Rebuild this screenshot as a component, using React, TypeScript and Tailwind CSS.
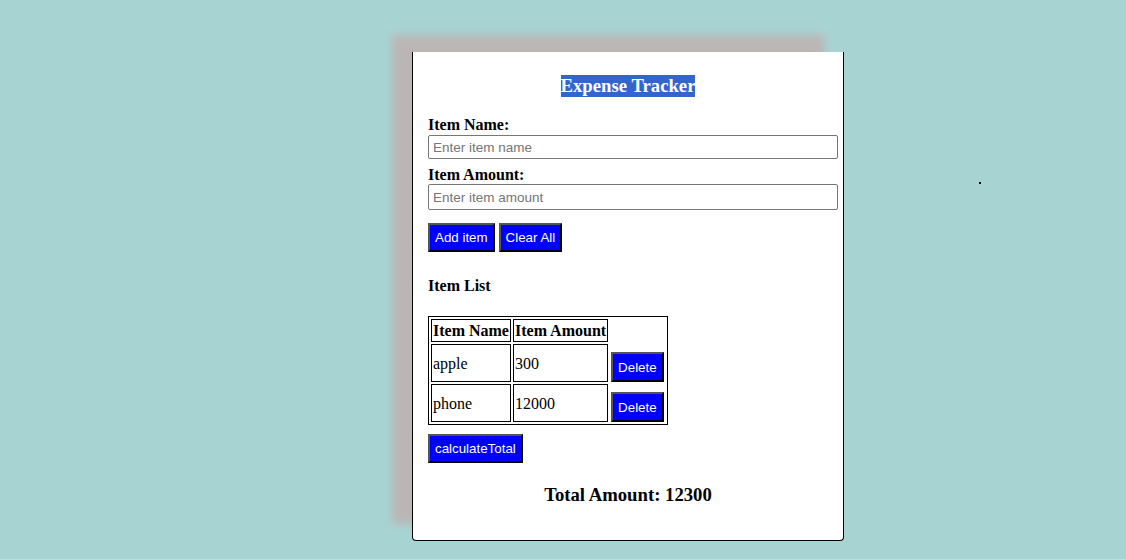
import React from "react";

const btn =
  "bg-[#0000ff] text-white font-['Liberation_Sans',Arial,sans-serif] text-[13.33px] leading-[15px] px-[5px] border-2 border-solid border-t-[#555555] border-l-[#555555] border-b-black border-r-black";

export default function App() {
  const items = [
    { name: "apple", amount: "300" },
    { name: "phone", amount: "12000" },
  ];
  return (
    <div className="relative w-full h-[559px] overflow-hidden bg-[#a8d3d3] font-['Liberation_Serif','Times_New_Roman',serif] text-black">
      <div className="ml-[412px] pt-[52px]">
        <div className="w-[432px] h-[489px] bg-white border-x border-b border-black rounded-b-[4px] px-[15px] shadow-[-20px_-17px_8px_#bbb6b5] flex flex-col items-start">
          <div className="mt-[23px] w-[400px] h-[22px] flex justify-center">
            <span className="block h-[22px] leading-[22px] bg-[#3366cc] text-white font-bold text-[18.72px]">
              Expense Tracker
            </span>
          </div>
          <div className="mt-[20px] font-bold text-[16px] leading-[16px]">Item Name:</div>
          <input
            className="mt-[2px] w-[410px] h-[24px] border border-[#767676] rounded-[2px] px-[4px] font-['Liberation_Sans',Arial,sans-serif] text-[13.5px] placeholder:text-[#757575] outline-none"
            placeholder="Enter item name"
          />
          <div className="mt-[8px] font-bold text-[16px] leading-[16px]">Item Amount:</div>
          <input
            className="mt-[1px] w-[410px] h-[26px] border border-[#767676] rounded-[2px] px-[4px] font-['Liberation_Sans',Arial,sans-serif] text-[13.5px] placeholder:text-[#757575] outline-none"
            placeholder="Enter item amount"
          />
          <div className="mt-[13px] flex gap-[4px]">
            <button className={`${btn} h-[29px]`}>Add item</button>
            <button className={`${btn} h-[29px]`}>Clear All</button>
          </div>
          <div className="mt-[24px] font-bold text-[16px] leading-[19px]">Item List</div>
          <table className="mt-[21px] border border-black border-separate border-spacing-[2px] text-[16px]">
            <thead>
              <tr>
                <th className="w-[80px] border border-black p-[1px] text-left font-bold leading-[19px] whitespace-nowrap">
                  Item Name
                </th>
                <th className="w-[93px] border border-black p-[1px] text-left font-bold leading-[19px] whitespace-nowrap">
                  Item Amount
                </th>
              </tr>
            </thead>
            <tbody>
              {items.map((it) => (
                <tr key={it.name}>
                  <td className="h-[38px] border border-black p-[1px] align-middle leading-[19px]">{it.name}</td>
                  <td className="h-[38px] border border-black p-[1px] align-middle leading-[19px]">{it.amount}</td>
                  <td className="pt-[8px] pb-0 px-[1px] align-top">
                    <button className={`${btn} h-[30px] block`}>Delete</button>
                  </td>
                </tr>
              ))}
            </tbody>
          </table>
          <button className={`${btn} mt-[9px] h-[29px]`}>calculateTotal</button>
          <div className="mt-[21px] w-[400px] h-[22px] text-center font-bold text-[18.72px] leading-[22px]">
            Total Amount: 12300
          </div>
        </div>
      </div>
      <div className="absolute left-[979px] top-[182px] w-[2px] h-[2px] bg-black" />
    </div>
  );
}
